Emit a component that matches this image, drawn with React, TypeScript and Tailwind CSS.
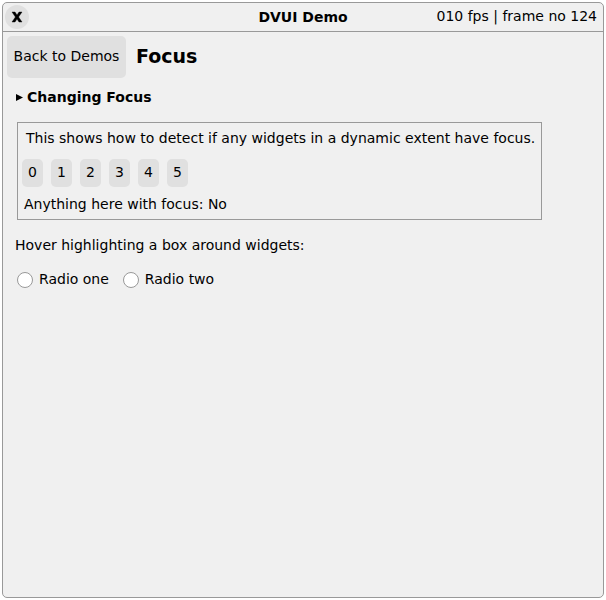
import React, { useState } from "react";

function FocusGroup() {
  const [focused, setFocused] = useState(false);
  return (
    <section
      className="mx-[10px] mt-[15px] w-[525px] max-w-full border border-[#999999] px-1 py-[5px]"
      onFocus={() => setFocused(true)}
      onBlur={() => setFocused(false)}
    >
      <p className="pl-1 leading-5">This shows how to detect if any widgets in a dynamic extent have focus.</p>
      <div className="mt-[11px] flex gap-2">
        {[0, 1, 2, 3, 4, 5].map((n) => (
          <button key={n} className="h-7 w-[21px] rounded-[5px] bg-[#e0e0e0] pb-[2px]">
            {n}
          </button>
        ))}
      </div>
      <p className="mt-[7px] px-[2px] leading-5">Anything here with focus: {focused ? "Yes" : "No"}</p>
    </section>
  );
}

function Radio({ label }: { label: string }) {
  return (
    <label className="flex items-center gap-[6px]">
      <input
        type="radio"
        name="choice"
        className="h-4 w-4 appearance-none rounded-full border border-[#999999] bg-white checked:border-4 checked:border-[#3d7bd9]"
      />
      <span className="pb-[2px]">{label}</span>
    </label>
  );
}

export default function App() {
  return (
    <div className="flex h-screen bg-white p-[2px] font-['DejaVu_Sans',sans-serif] text-sm text-black">
      <main className="flex-1 rounded-[5px] border border-[#999999] bg-[#f0f0f0]">
        <header className="grid h-[29px] grid-cols-[1fr_auto_1fr] items-center border-b border-[#999999] px-[2px]">
          <button aria-label="Close" className="flex h-6 w-6 items-center justify-center rounded-full bg-[#e0e0e0]">
            <svg viewBox="0 0 24 24" className="h-6 w-6">
              <path d="M7 7 H10 L12 10 L14 7 H17 L13.6 12 L17 17 H14 L12 14 L10 17 H7 L10.4 12 Z" stroke="black" strokeWidth="0.4" />
            </svg>
          </button>
          <h1 className="font-bold">DVUI Demo</h1>
          <span className="pr-1 pb-[2px] text-right">010 fps | frame no 124</span>
        </header>
        <div className="px-1 pt-1">
          <div className="flex items-center gap-[10px]">
            <button className="h-[42px] w-[119px] rounded-[5px] bg-[#e0e0e0] pb-[2px]">Back to Demos</button>
            <h2 className="text-[19px] font-bold">Focus</h2>
          </div>
          <button className="mt-[9px] flex h-5 items-center gap-1 px-[9px] font-bold">
            <svg viewBox="0 0 7 8" className="h-2 w-[7px]">
              <path d="M0 1 L7 4.5 L0 8 Z" />
            </svg>
            Changing Focus
          </button>
          <FocusGroup />
          <p className="mt-[15px] px-2 leading-5">Hover highlighting a box around widgets:</p>
          <div className="mt-[14px] flex gap-[14px] px-[10px]">
            <Radio label="Radio one" />
            <Radio label="Radio two" />
          </div>
        </div>
      </main>
    </div>
  );
}
